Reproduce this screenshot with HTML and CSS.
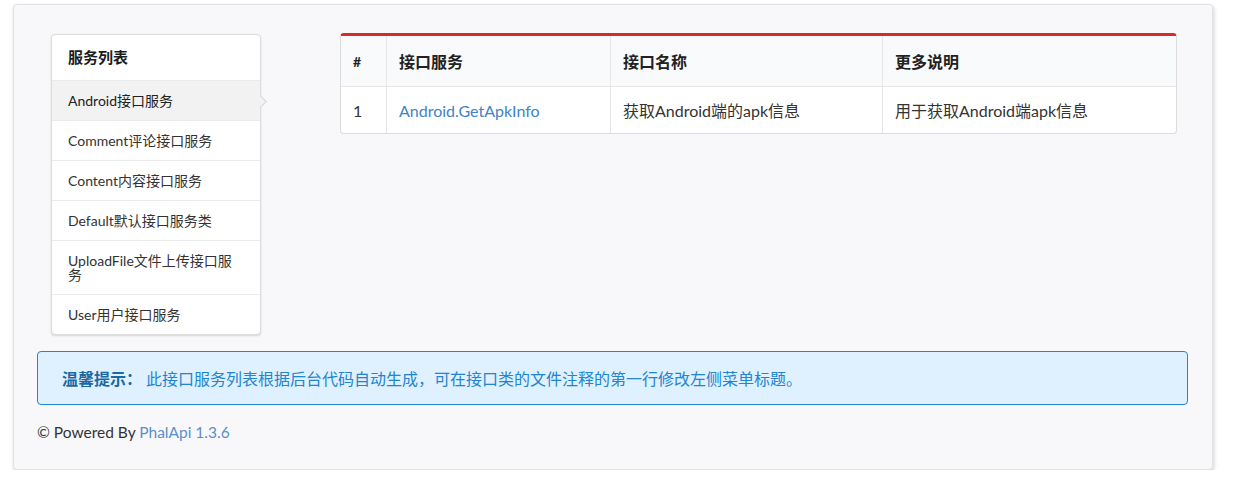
FILE: index.html
```html
<!DOCTYPE html>
<html lang="zh-CN">
<head>
<meta charset="utf-8">
<title>PhalApi 接口列表</title>
<link rel="stylesheet" href="styles.css">
</head>
<body>
<div class="page">
  <div class="top-row">
    <div class="menu">
      <div class="menu-header">服务列表</div>
      <a class="item active">Android接口服务</a>
      <a class="item">Comment评论接口服务</a>
      <a class="item">Content内容接口服务</a>
      <a class="item">Default默认接口服务类</a>
      <a class="item">UploadFile文件上传接口服务</a>
      <a class="item">User用户接口服务</a>
    </div>
    <table class="api-table">
      <thead>
        <tr>
          <th class="col-num">#</th>
          <th class="col-service">接口服务</th>
          <th class="col-name">接口名称</th>
          <th class="col-desc">更多说明</th>
        </tr>
      </thead>
      <tbody>
        <tr>
          <td>1</td>
          <td><a class="link">Android.GetApkInfo</a></td>
          <td>获取Android端的apk信息</td>
          <td>用于获取Android端apk信息</td>
        </tr>
      </tbody>
    </table>
  </div>
  <div class="message"><strong>温馨提示：</strong>&nbsp;此接口服务列表根据后台代码自动生成，可在接口类的文件注释的第一行修改左侧菜单标题。</div>
  <div class="footer">© Powered By <a class="link">PhalApi 1.3.6</a></div>
</div>
</body>
</html>
```

FILE: styles.css
```css
html, body {
  margin: 0;
  padding: 0;
  background: #ffffff;
}
body {
  font-family: Lato, "Noto Sans CJK SC", sans-serif;
  color: #333333;
}
.page {
  box-sizing: border-box;
  margin: 4px 0 0 13px;
  width: 1200px;
  height: 466px;
  background: #f8f8fa;
  border: 1px solid #e2e2e4;
  border-radius: 4px;
  box-shadow: 1px 2px 4px rgba(0, 0, 0, 0.18);
  padding: 28px 24px 0 23px;
}
.top-row {
  display: flex;
  align-items: flex-start;
}
.menu {
  box-sizing: border-box;
  margin: 1px 0 0 14px;
  width: 210px;
  background: #fff;
  border: 1px solid #dcdcdd;
  border-radius: 4px;
  box-shadow: 0 1px 2px rgba(34, 36, 38, 0.15);
  font-size: 14px;
}
.menu-header {
  padding: 15px 16px 16px;
  line-height: 14px;
  font-size: 15px;
  font-weight: bold;
  color: #1b1c1d;
}
.item {
  display: block;
  position: relative;
  padding: 13px 16px 12px;
  line-height: 14px;
  border-top: 1px solid #ebebeb;
  color: #333333;
}
.item.active {
  background: #f2f2f2;
  color: #222;
}
.item.active::after {
  content: "";
  position: absolute;
  right: -5px;
  top: 50%;
  width: 8px;
  height: 8px;
  margin-top: -4px;
  background: #f2f2f2;
  border-top: 1px solid #d4d4d5;
  border-right: 1px solid #d4d4d5;
  transform: rotate(45deg);
}
.api-table {
  margin-left: 79px;
  margin-top: 0;
  width: 837px;
  border-collapse: separate;
  border-spacing: 0;
  border: 1px solid #dcdcdd;
  border-top: 3px solid #db2828;
  border-radius: 4px;
  background: #fff;
  font-size: 16px;
  table-layout: fixed;
}
.api-table th {
  height: 50px;
  padding: 0 12px;
  text-align: left;
  background: #f9fafb;
  color: #222;
  font-weight: bold;
  border-bottom: 1px solid #e6e6e6;
}
.api-table td {
  height: 46px;
  padding: 0 12px;
  color: #333;
}
.api-table th + th,
.api-table td + td {
  border-left: 1px solid #e6e6e6;
}
.api-table th.col-num { width: 21px; font-size: 14px; }
.api-table th.col-service { width: 199px; }
.api-table th.col-name { width: 247px; }
.link {
  color: #4183c4;
  text-decoration: none;
}
.message {
  box-sizing: border-box;
  margin-top: 16px;
  height: 54px;
  display: flex;
  align-items: center;
  padding: 0 24px;
  background: #dff0ff;
  border: 1px solid #2185d0;
  border-radius: 4px;
  color: #2185d0;
  font-size: 16px;
}
.message strong {
  color: #1a69a4;
}
.footer {
  margin-top: 17px;
  line-height: 20px;
  font-size: 15.5px;
  color: #333;
}
.footer .link {
  color: #5b8fc9;
}
```
